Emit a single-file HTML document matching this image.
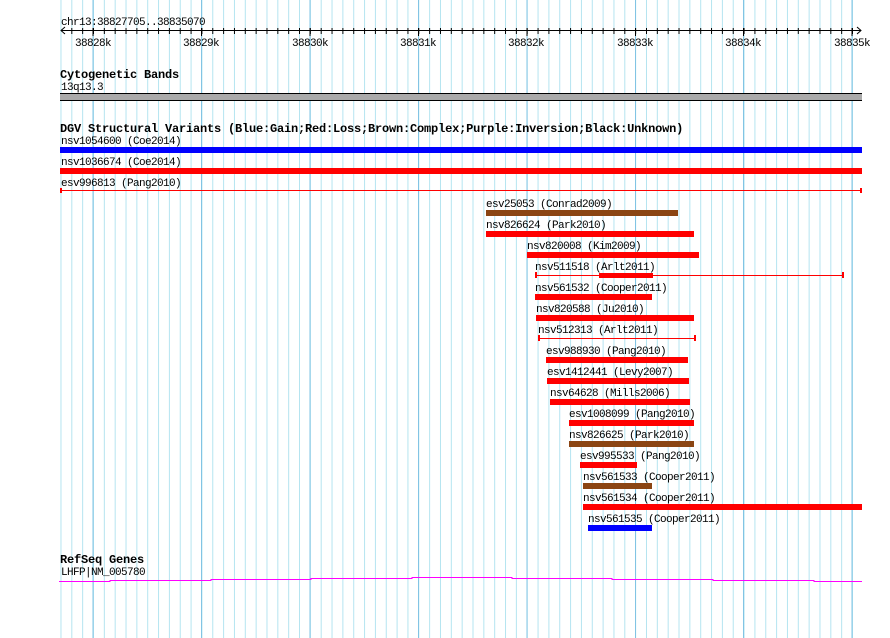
<!DOCTYPE html>
<html><head><meta charset="utf-8"><style>
html,body{margin:0;padding:0;background:#fff;width:890px;height:638px;overflow:hidden}
svg text{font-family:"Liberation Mono","DejaVu Sans Mono",monospace;font-size:11px;letter-spacing:-0.6px;fill:#000}
svg text.h{font-weight:bold;font-size:12px;letter-spacing:-0.2px}
</style></head><body>
<svg width="890" height="638" viewBox="0 0 890 638" xmlns="http://www.w3.org/2000/svg" shape-rendering="crispEdges">
<defs>
<pattern id="minor" patternUnits="userSpaceOnUse" x="60.47" y="0" width="10.843" height="638">
<rect x="0" y="0" width="1" height="638" fill="#b4e4f0"/>
</pattern>
<pattern id="tick" patternUnits="userSpaceOnUse" x="60.47" y="0" width="10.843" height="638">
<rect x="0" y="28" width="1" height="6" fill="#000"/>
</pattern>
</defs>
<rect x="60" y="0" width="793" height="638" fill="url(#minor)"/>
<g fill="#82c4e4">
<rect x="92.6" y="0" width="1" height="638"/>
<rect x="201" y="0" width="1" height="638"/>
<rect x="309.5" y="0" width="1" height="638"/>
<rect x="417.9" y="0" width="1" height="638"/>
<rect x="526.3" y="0" width="1" height="638"/>
<rect x="634.8" y="0" width="1" height="638"/>
<rect x="743.2" y="0" width="1" height="638"/>
<rect x="851.6" y="0" width="1" height="638"/>
</g>
<!-- ruler -->
<text x="61" y="25">chr13:38827705..38835070</text>
<rect x="61" y="30" width="800" height="1" fill="#000"/>
<rect x="66" y="28" width="788" height="6" fill="url(#tick)"/>
<path d="M65 27 L61 30.5 L65 34 M857 27 L861 30.5 L857 34" stroke="#000" fill="none" shape-rendering="auto"/>
<g fill="#000">
<rect x="92.6" y="28" width="1" height="8"/><rect x="201" y="28" width="1" height="8"/><rect x="309.5" y="28" width="1" height="8"/><rect x="417.9" y="28" width="1" height="8"/><rect x="526.3" y="28" width="1" height="8"/><rect x="634.8" y="28" width="1" height="8"/><rect x="743.2" y="28" width="1" height="8"/><rect x="851.6" y="28" width="1" height="8"/>
</g>
<g text-anchor="middle">
<text x="93" y="46">38828k</text><text x="201" y="46">38829k</text><text x="310" y="46">38830k</text><text x="418" y="46">38831k</text><text x="526" y="46">38832k</text><text x="635" y="46">38833k</text><text x="743" y="46">38834k</text><text x="852" y="46">38835k</text>
</g>
<!-- cyto -->
<text class="h" x="60" y="78">Cytogenetic Bands</text>
<text x="61" y="90">13q13.3</text>
<rect x="60" y="93" width="802" height="8" fill="#aaaaaa"/>
<rect x="60" y="93" width="802" height="1" fill="#000"/>
<rect x="60" y="100" width="802" height="1" fill="#000"/>
<!-- DGV -->
<text class="h" x="60" y="132">DGV Structural Variants (Blue:Gain;Red:Loss;Brown:Complex;Purple:Inversion;Black:Unknown)</text>
<text x="61" y="144">nsv1054600 (Coe2014)</text>
<rect x="60" y="147" width="802" height="6" fill="#0000ff"/>
<text x="61" y="165">nsv1036674 (Coe2014)</text>
<rect x="60" y="168" width="802" height="6" fill="#ff0000"/>
<text x="61" y="186">esv996813 (Pang2010)</text>
<rect x="60" y="190" width="802" height="1" fill="#ff0000"/>
<rect x="60" y="188" width="2" height="5" fill="#ff0000"/><rect x="860" y="188" width="2" height="5" fill="#ff0000"/>

<text x="486" y="207">esv25053 (Conrad2009)</text>
<rect x="486" y="210" width="192" height="6" fill="#8b4513"/>
<text x="486" y="228">nsv826624 (Park2010)</text>
<rect x="486" y="231" width="208" height="6" fill="#ff0000"/>
<text x="527" y="249">nsv820008 (Kim2009)</text>
<rect x="527" y="252" width="172" height="6" fill="#ff0000"/>
<text x="535" y="270">nsv511518 (Arlt2011)</text>
<rect x="535" y="275" width="308" height="1" fill="#ff0000"/>
<rect x="535" y="272" width="2" height="6" fill="#ff0000"/><rect x="842" y="272" width="2" height="6" fill="#ff0000"/>
<rect x="599" y="273" width="54" height="5" fill="#ff0000"/>
<text x="535" y="291">nsv561532 (Cooper2011)</text>
<rect x="535" y="294" width="117" height="6" fill="#ff0000"/>
<text x="536" y="312">nsv820588 (Ju2010)</text>
<rect x="536" y="315" width="158" height="6" fill="#ff0000"/>
<text x="538" y="333">nsv512313 (Arlt2011)</text>
<rect x="538" y="338" width="157" height="1" fill="#ff0000"/>
<rect x="538" y="335" width="2" height="6" fill="#ff0000"/><rect x="694" y="335" width="2" height="6" fill="#ff0000"/>
<text x="546" y="354">esv988930 (Pang2010)</text>
<rect x="546" y="357" width="142" height="6" fill="#ff0000"/>
<text x="547" y="375">esv1412441 (Levy2007)</text>
<rect x="547" y="378" width="142" height="6" fill="#ff0000"/>
<text x="550" y="396">nsv64628 (Mills2006)</text>
<rect x="550" y="399" width="140" height="6" fill="#ff0000"/>
<text x="569" y="417">esv1008099 (Pang2010)</text>
<rect x="569" y="420" width="125" height="6" fill="#ff0000"/>
<text x="569" y="438">nsv826625 (Park2010)</text>
<rect x="569" y="441" width="125" height="6" fill="#8b4513"/>
<text x="580" y="459">esv995533 (Pang2010)</text>
<rect x="580" y="462" width="57" height="6" fill="#ff0000"/>
<text x="583" y="480">nsv561533 (Cooper2011)</text>
<rect x="583" y="483" width="69" height="6" fill="#8b4513"/>
<text x="583" y="501">nsv561534 (Cooper2011)</text>
<rect x="583" y="504" width="279" height="6" fill="#ff0000"/>
<text x="588" y="522">nsv561535 (Cooper2011)</text>
<rect x="588" y="525" width="64" height="6" fill="#0000ff"/>
<!-- RefSeq -->
<text class="h" x="60" y="563">RefSeq Genes</text>
<text x="61" y="575">LHFP|NM_005780</text>
<path d="M59 581.5H110V580.5H211V579.5H311V578.5H412V577.5H512V578.5H612V579.5H713V580.5H814V581.5H862" stroke="#ff00ff" fill="none"/>
</svg>
</body></html>
